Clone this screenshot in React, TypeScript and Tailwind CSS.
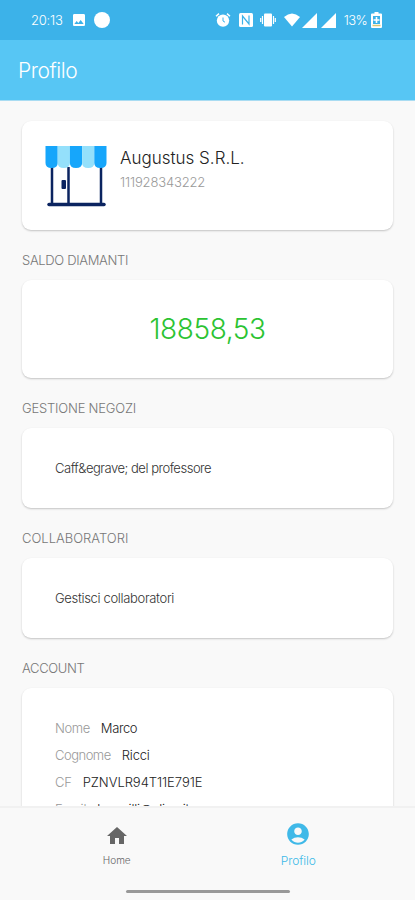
import React from "react";
import { MdAccountCircle, MdHome, MdImage } from "react-icons/md";

const account = [
  { label: "Nome", value: "Marco", labelClass: "tracking-[-0.4px]", valueClass: "tracking-[-0.4px]" },
  { label: "Cognome", value: "Ricci", labelClass: "tracking-[-0.5px]", valueClass: "tracking-[-0.2px]" },
  { label: "CF", value: "PZNVLR94T11E791E", labelClass: "tracking-[-0.2px]", valueClass: "tracking-[-0.05px]" },
  { label: "Email", value: "lucavilli@alice.it", labelClass: "tracking-[-0.2px]", valueClass: "tracking-[-0.2px]" },
];

function StatusBar() {
  return (
    <div className="flex h-10 shrink-0 items-center bg-[#3cb2e9] pl-[31px] pr-[33px] text-white">
      <span className="text-[13px] font-light leading-none tracking-[-0.2px]">20:13</span>
      <MdImage className="ml-2 size-4" />
      <span className="ml-[7px] size-4 rounded-full bg-white" />
      <div className="ml-auto flex items-center">
        <svg viewBox="0 0 16 16" className="size-4">
          <circle cx="8" cy="8.6" r="6.2" fill="white" />
          <path d="M1 4.2 4 1.6M15 4.2 12 1.6" stroke="white" strokeWidth="1.5" />
          <path d="M8 5.500v3.500l2 1.200" stroke="#3cb2e9" strokeWidth="1" fill="none" />
        </svg>
        <svg viewBox="0 0 14 14" className="ml-2 size-3.5">
          <rect width="14" height="14" rx="1.5" fill="white" />
          <path d="M3.500 11.500V3l6.500 8V2.500" stroke="#3cb2e9" strokeWidth="1.200" fill="none" />
        </svg>
        <svg viewBox="0 0 16 14" className="ml-[7px] h-3.5 w-4">
          <rect x="4" y="0.5" width="8" height="13" rx="1" fill="white" />
          <path d="M2.5 3v8M.7 5v4M13.5 3v8M15.3 5v4" stroke="white" strokeWidth="1.2" />
        </svg>
        <svg viewBox="0 0 16 14" className="ml-2 h-3.5 w-4">
          <path d="M0 4Q8-3 16 4L8 13.5Z" fill="white" />
        </svg>
        <svg viewBox="0 0 15 15" className="ml-0.5 size-[15px]">
          <path d="M0 15 15 0V15Z" fill="white" />
        </svg>
        <svg viewBox="0 0 15 15" className="ml-1 size-[15px]">
          <path d="M0 15 15 0V15Z" fill="white" />
        </svg>
        <span className="ml-2 text-[13px] font-light leading-none tracking-[-0.6px]">13%</span>
        <svg viewBox="0 0 11 16" className="ml-1 h-4 w-[11px]">
          <path d="M3.5 0h4v1.5H10a1 1 0 0 1 1 1V15a1 1 0 0 1-1 1H1a1 1 0 0 1-1-1V2.5a1 1 0 0 1 1-1h2.5Z" fill="white" />
          <path d="M2 4h7v8H2Z" fill="#3cb2e9" />
          <path d="M5.5 5v6M2.5 8h6" stroke="white" strokeWidth="1.6" />
          <path d="M1.5 13.5h8" stroke="#d6c875" strokeWidth="1.5" />
        </svg>
      </div>
    </div>
  );
}

function StoreIcon() {
  return (
    <svg viewBox="0 0 62 62" className="h-[62px] w-[62px] shrink-0">
      <path d="M7 22V58M23.5 22V58M56 22V58" stroke="#0b2460" strokeWidth="2.5" />
      <path d="M4 59.5H59" stroke="#0b2460" strokeWidth="3.5" strokeLinecap="round" />
      <rect x="16.5" y="35" width="4.5" height="9" rx="1" fill="#0b2460" />
      <path d="M.5 1h12.2v17q0 5-6.1 5t-6.1-5Z" fill="#16a6fb" />
      <path d="M12.700 1h12.200v17q0 5-6.100 5t-6.100-5Z" fill="#94e0fb" />
      <path d="M24.900 1h12.200v17q0 5-6.100 5t-6.100-5Z" fill="#16a6fb" />
      <path d="M37.100 1h12.200v17q0 5-6.100 5t-6.100-5Z" fill="#94e0fb" />
      <path d="M49.300 1h12.200v17q0 5-6.100 5t-6.100-5Z" fill="#16a6fb" />
    </svg>
  );
}

export default function App() {
  return (
    <div className="flex h-[900px] w-[415px] flex-col overflow-hidden bg-[#f9f9f9] font-['Inter','Liberation_Sans',sans-serif]">
      <StatusBar />
      <header className="flex h-[61px] shrink-0 items-center border-b border-[#a9dcf2] bg-[#57c6f4] pl-[18px]">
        <h1 className="text-[21px] font-light leading-none tracking-[-0.45px] text-white">Profilo</h1>
      </header>

      <main className="min-h-0 flex-1 overflow-hidden px-[22px] pt-5">
        <section className="flex h-[109px] rounded-[9px] bg-white pl-[23px] pt-6 shadow-[0_1px_2px_rgba(0,0,0,0.22)]">
          <StoreIcon />
          <div className="ml-[13px] pt-1">
            <h2 className="text-[17px] font-light leading-[18px] text-[#222]">Augustus S.R.L.</h2>
            <p className="mt-[7px] text-[13px] font-light leading-4 tracking-[-0.15px] text-[#999]">111928343222</p>
          </div>
        </section>

        <h3 className="mt-[22px] text-[13px] font-light leading-4 tracking-[-0.33px] text-[#777]">SALDO DIAMANTI</h3>
        <section className="mt-3 flex h-[98px] items-center justify-center rounded-[9px] bg-white shadow-[0_1px_2px_rgba(0,0,0,0.22)]">
          <span className="text-[28px] font-light tracking-[-0.4px] text-[#2bc332]">18858,53</span>
        </section>

        <h3 className="mt-[22px] text-[13px] font-light leading-4 tracking-[-0.2px] text-[#777]">GESTIONE NEGOZI</h3>
        <section className="mt-3 flex h-20 items-center rounded-[9px] bg-white pl-[33px] pt-px shadow-[0_1px_2px_rgba(0,0,0,0.22)]">
          <span className="text-[13px] font-light tracking-[-0.48px] text-[#333]">Caff&amp;egrave; del professore</span>
        </section>

        <h3 className="mt-[22px] text-[13px] font-light leading-4 text-[#777]">COLLABORATORI</h3>
        <section className="mt-3 flex h-20 items-center rounded-[9px] bg-white pl-[33px] pt-px shadow-[0_1px_2px_rgba(0,0,0,0.22)]">
          <span className="text-[13px] font-light tracking-[-0.33px] text-[#333]">Gestisci collaboratori</span>
        </section>

        <h3 className="mt-[22px] text-[13px] font-light leading-4 tracking-[-0.35px] text-[#777]">ACCOUNT</h3>
        <section className="mt-3 h-[180px] rounded-[9px] bg-white pl-[33px] pt-[26px] shadow-[0_1px_2px_rgba(0,0,0,0.22)]">
          {account.map((row) => (
            <div key={row.label} className="flex h-[27px] items-center gap-[11px] text-[13px] font-light leading-4">
              <span className={`text-[#999] ${row.labelClass}`}>{row.label}</span>
              <span className={`text-[#222] ${row.valueClass}`}>{row.value}</span>
            </div>
          ))}
        </section>
      </main>

      <nav className="shrink-0 border-t-2 border-[#f1f1f1] bg-[#f9f9f9]">
        <div className="flex h-[82px] px-[26px]">
          <a className="flex flex-1 flex-col items-center pt-4 text-[#666]">
            <MdHome className="size-6" />
            <span className="mt-1.5 text-[10px] font-light leading-3">Home</span>
          </a>
          <a className="flex flex-1 flex-col items-center pt-[13px] text-[#40b9e8]">
            <MdAccountCircle className="size-[26px]" />
            <span className="mt-2 text-[12px] font-light leading-3 tracking-[-0.1px]">Profilo</span>
          </a>
        </div>
        <div className="mx-auto mb-[7px] h-[3px] w-[164px] rounded-full bg-[#999]" />
      </nav>
    </div>
  );
}
